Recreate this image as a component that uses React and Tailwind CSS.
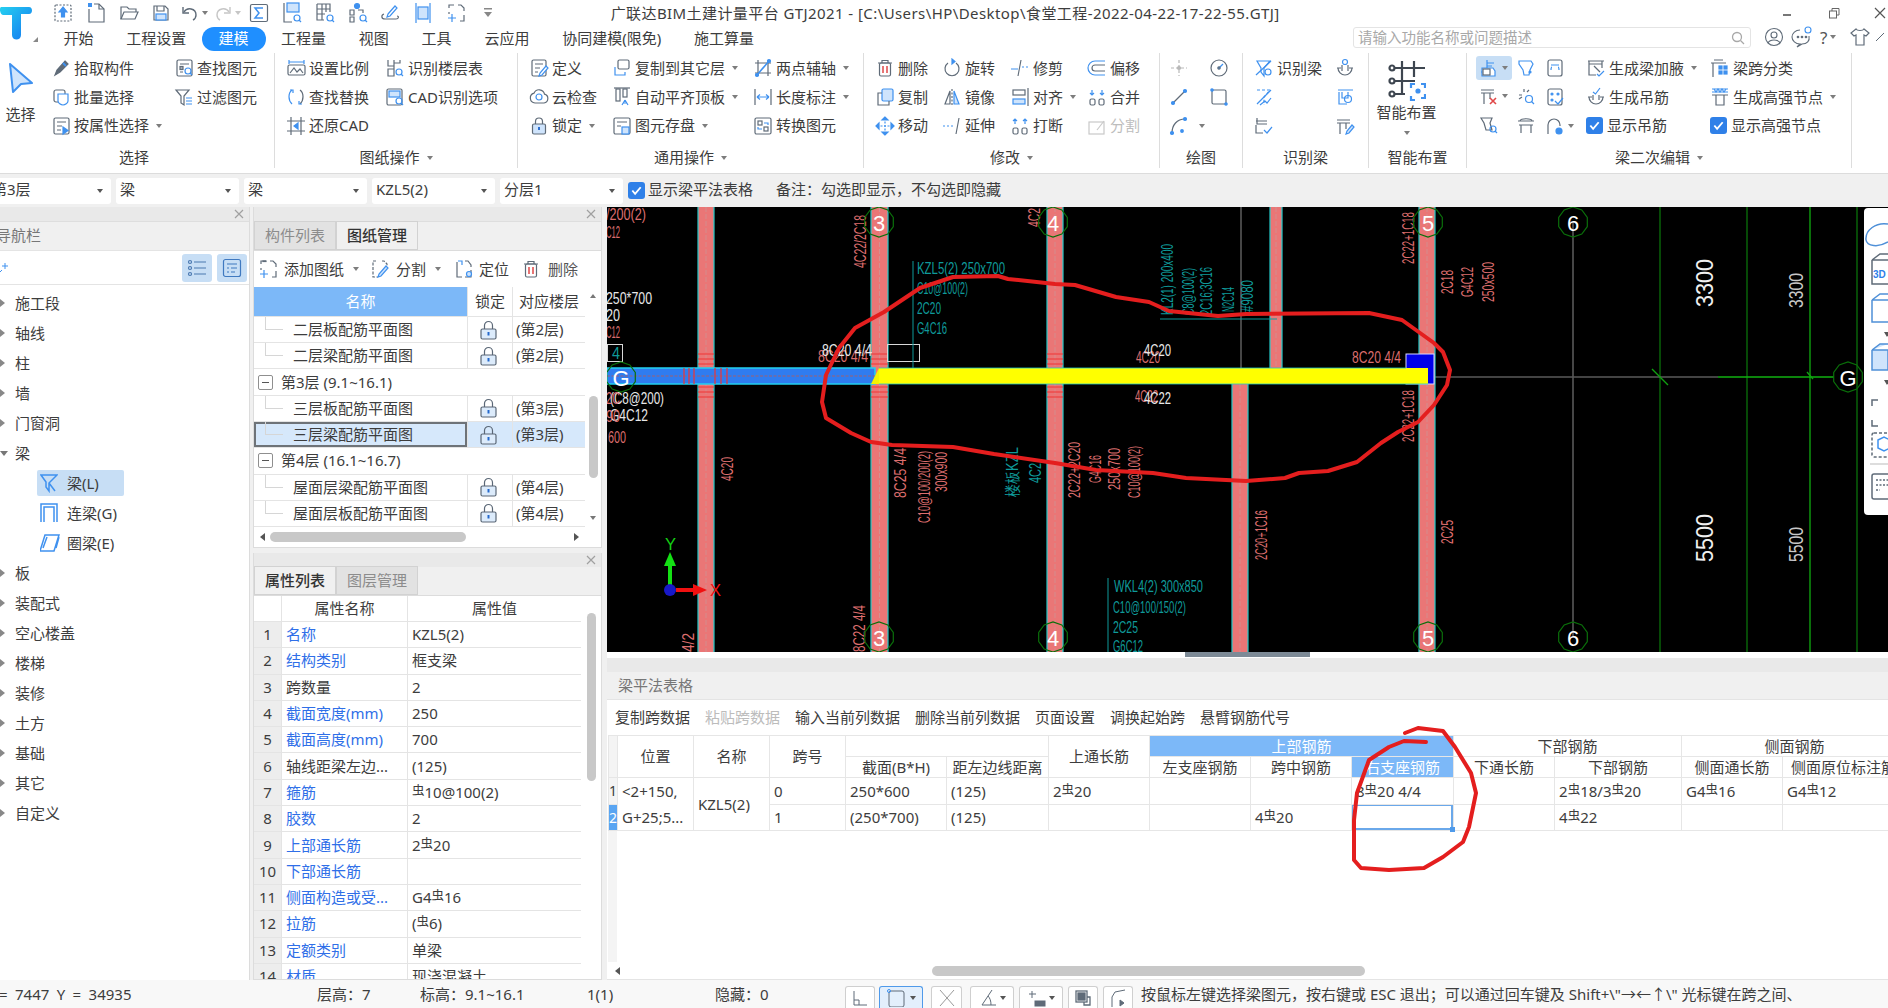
const G = "#5f6b78";
const B = "#3f91ef";
const L = "#cfe4fc";

// ribbon and toolbar glyphs, all on a 20x20 box
const icons = {
  pick: <><path d="M14 3l3 3-8 8-5 3 2-5z" fill={G} stroke={G} /><path d="M12 5l3 3" stroke={B} strokeWidth="2" /></>,
  batch: <><rect x="3" y="3" width="11" height="12" rx="2" /><path d="M7 7h10v7c0 2-3 4-5 4s-5-2-5-4z" fill="#fff" stroke={B} /></>,
  attr: <><rect x="3" y="2" width="15" height="16" rx="1.5" /><path d="M6 6h9M6 10h5M6 14h4" /><path d="M12 11l5 3.5-5 3.5z" fill={B} stroke={B} /></>,
  find: <><rect x="3" y="2" width="15" height="16" rx="1.5" /><path d="M6 6h9M6 10h3M6 14h3" /><rect x="6" y="8.5" width="3" height="3" /><circle cx="14" cy="13" r="3" stroke={B} /><path d="M16 15l2 2" stroke={B} /></>,
  filter: <><path d="M2 3h13l-5 6v9l-3-2V9z" /><path d="M12 11h6M12 14h6M12 17h6" stroke={B} /></>,
  scale: <><path d="M3 2v4M18 2v4M3 4h15" stroke={B} /><rect x="2" y="7" width="17" height="10" rx="1.5" /><path d="M4 15l4-5 3 4 3-3 3 4" /></>,
  floorTable: <><path d="M3 2v6h6V2M9 5h6V2M3 11h6v7H3zM9 8v3" /><circle cx="14" cy="14" r="3" stroke={B} /><path d="M16 16l2 2" stroke={B} /></>,
  swap: <><path d="M6 3C2 6 2 13 6 17" stroke={B} /><path d="M14 3c4 3 4 10 0 14" /><path d="M4 3h3v3M16 17h-3v-3" stroke={B} /></>,
  cad: <><rect x="2" y="2" width="15" height="16" rx="1.5" /><rect x="4" y="4" width="11" height="6" fill={L} stroke={B} /><circle cx="14" cy="14" r="3" stroke={B} /><path d="M16 16l2 2" stroke={B} /></>,
  restore: <><path d="M5 1v18M15 1v18M1 5h18M1 15h18" /><path d="M12 7l-4 3 4 3z" fill={B} stroke={B} /></>,
  define: <><rect x="3" y="2" width="14" height="16" rx="1.5" /><path d="M6 6h8M6 10h5M6 14h3" /><path d="M17 8l-6 7-1 3 3-1 6-7z" fill="#fff" stroke={B} /></>,
  cloud: <><path d="M6 16a5 5 0 0 1-1-9.800a5.500 5.500 0 0 1 10.500 1A4.500 4.500 0 0 1 15 16z" /><circle cx="10" cy="10" r="3" stroke={B} /></>,
  lock: <><path d="M6.500 8V5.500a3.500 3.500 0 0 1 7 0V8" /><rect x="3.500" y="8" width="13" height="10" rx="1.500" fill={L} /><path d="M10 11v3" stroke="#2d6fd0" strokeWidth="2" /></>,
  copyFloor: <><rect x="6" y="2" width="11" height="9" rx="1.500" /><path d="M3 9v8h10v-3" stroke={B} /></>,
  autoAlign: <><rect x="4" y="2" width="4" height="12" /><rect x="11" y="2" width="4" height="8" /><path d="M2 1h16" /><path d="M13 13l-3 5M13 13l3 5M11 16h4" stroke={B} /></>,
  saveEl: <><rect x="2" y="2" width="16" height="16" rx="1.500" /><path d="M5 6h10M5 10h4" /><rect x="10" y="11" width="7" height="7" fill={L} stroke={B} /></>,
  twoPoint: <><path d="M5 2v16M15 2v16M2 5h16M2 15h16" /><path d="M4 17L16 3" stroke={B} strokeWidth="1.600" /><circle cx="4" cy="17" r="1.500" fill={B} stroke={B} /><circle cx="16" cy="3" r="1.500" fill={B} stroke={B} /></>,
  length: <><path d="M2 2v16M18 2v16" /><path d="M4 10h12M4 10l3-2.500M4 10l3 2.500M16 10l-3-2.500M16 10l-3 2.500" stroke={B} /></>,
  convert: <><rect x="2" y="2" width="16" height="16" rx="1.500" /><rect x="5" y="5" width="4" height="4" /><rect x="11" y="11" width="4" height="4" /><path d="M11 7h4v2M9 13H5v-2" stroke={B} /></>,
  trash: <><path d="M3 5h14M7 5V2.500h6V5" /><rect x="4.500" y="5" width="11" height="13" rx="1.500" /><path d="M8 8v7M12 8v7" stroke="#e04848" strokeWidth="1.500" /></>,
  rotate: <><path d="M14 5a7 7 0 1 1-8 0" /><path d="M10 1v5l3-2.500z" fill={B} stroke={B} /></>,
  trim: <><path d="M1 11h7M12 9h2M16 9h2" stroke={B} /><path d="M11 2L8 18" /></>,
  offset: <><path d="M18 3H8a7 7 0 0 0 0 14h10" stroke={B} /><path d="M18 7H8a3 3 0 0 0 0 6h10" /></>,
  copy: <><rect x="7" y="2" width="11" height="12" rx="1.500" fill={L} stroke={B} /><path d="M7 6H3v12h11v-4" /></>,
  mirror: <><path d="M8 4L3 17h5z" /><path d="M12 4l5 13h-5z" fill={L} stroke={B} /><path d="M10 2v16" strokeDasharray="2 1.500" /></>,
  align: <><rect x="3" y="3" width="12" height="5" /><rect x="3" y="12" width="12" height="5" fill={L} stroke={B} /><path d="M18 1v18" /></>,
  merge: <><rect x="3" y="12" width="5" height="6" rx="1.500" /><rect x="12" y="12" width="5" height="6" rx="1.500" /><path d="M5 3v5M15 3v5M3 6l2 2 2-2M13 6l2 2 2-2" stroke={B} /></>,
  move: <><path d="M10 2v16M2 10h16" stroke={B} strokeDasharray="2 1.500" /><path d="M10 1l-3 3h6zM10 19l-3-3h6zM1 10l3-3v6zM19 10l-3-3v6z" fill={B} stroke={B} /></>,
  extend: <><path d="M1 10h2M5 10h2M9 10h2" stroke={B} /><path d="M17 2l-3 16" /></>,
  split: <><rect x="3" y="12" width="5" height="6" rx="1.500" /><rect x="12" y="12" width="5" height="6" rx="1.500" /><path d="M5 3v5M15 3v5M3 5l2-2 2 2M13 5l2-2 2 2" stroke={B} /></>,
  splitOff: <g stroke="#c9c9c9"><rect x="2" y="6" width="15" height="12" /><path d="M10 14l7-9" /></g>,
  cross: <g stroke="#b8b8b8"><path d="M10 2v16M2 10h16" strokeDasharray="3 2" /><circle cx="10" cy="10" r="1.500" fill="#b8b8b8" /></g>,
  clock: <><circle cx="10" cy="10" r="8" /><path d="M10 10l4-4" stroke={B} /><circle cx="10" cy="10" r="1.200" fill={B} /></>,
  line: <><path d="M4 16L16 4" /><circle cx="4" cy="16" r="1.500" fill={B} stroke={B} /><circle cx="16" cy="4" r="1.500" fill={B} stroke={B} /></>,
  rect: <><rect x="3" y="3" width="14" height="14" rx="1.500" /><circle cx="3" cy="3" r="1.200" fill={B} stroke={B} /><circle cx="17" cy="17" r="1.200" fill={B} stroke={B} /></>,
  arc: <><path d="M3 17C3 9 8 3 16 3" /><circle cx="3" cy="17" r="1.500" fill={B} stroke={B} /><circle cx="16" cy="3" r="1.500" fill={B} stroke={B} /><circle cx="13" cy="15" r="1.300" fill={B} stroke={B} /></>,
  beamId: <><path d="M3 3h13L10 10v8l-3-4V10z" stroke={B} /><circle cx="14" cy="14" r="3" stroke={B} /><path d="M2 17L17 3" stroke={B} /></>,
  beamId2: <><path d="M3 3h13L10 10v8" stroke={B} strokeDasharray="3 2" /><path d="M3 17L17 3M6 18l5-4 2 2 4-5" stroke={B} /></>,
  beamId3: <><path d="M3 2v6h10M2 5h11M2 9v8h7" /><path d="M10 14l3 3 5-6" stroke={B} /></>,
  hook: <><circle cx="10" cy="4" r="2.500" stroke={B} /><path d="M3 10a7 7 0 0 0 14 0M7 7v6M13 7v6M2 10h4M14 10h4" /></>,
  beamTb: <><path d="M3 3h15M4 5v12h8" stroke={B} /><path d="M7 5v6h6V5" stroke={B} /><circle cx="13" cy="12" r="3.500" stroke={B} /></>,
  beamPen: <><path d="M2 4h13M2 7h13M5 7v11M11 7v6" /><path d="M17 9l-5 6-1 3 3-1 5-6z" fill={L} stroke={B} /></>,
  beamBtn: <><path d="M8 2v11M2 14h12M8 5h7M8 8h5" stroke={B} /><path d="M3 10h11l2 3v5H3z" fill="#fff" stroke={B} /><rect x="4" y="11" width="7" height="6" stroke={G} /></>,
  shield: <><path d="M3 3h12l2 3-3 6-1 5H8l-1-5-4-6z" stroke={B} /><circle cx="14" cy="14" r="1" stroke={B} fill={B} /></>,
  slot: <><rect x="3" y="2" width="14" height="16" rx="2" /><path d="M6 7h8M6 12c0-3 1-3 1-3M14 12c0-3-1-3-1-3" stroke={B} /></>,
  genHaunch: <><path d="M2 3h16M3 3v14h7M16 3v7M3 6h13" /><path d="M8 8l6 6" /><path d="M11 16l2 2 5-5" stroke={B} /></>,
  span: <><path d="M4 2h9M1 5h15M3 5v14" /><rect x="9" y="8" width="3" height="3" fill={B} stroke={B} /><rect x="14" y="8" width="3" height="3" fill={B} stroke={B} /><rect x="9" y="13" width="3" height="3" fill={B} stroke={B} /><rect x="14" y="13" width="3" height="3" fill={B} stroke={B} /></>,
  delBar: <><path d="M2 4h13M2 7h13M5 7v11M11 7v6" /><path d="M11 12l6 6M17 12l-6 6" stroke="#e04848" strokeWidth="1.600" /></>,
  burst: <><path d="M3 8h3M8 2v3M13 3l-2 2M3 12l3-2" /><circle cx="13" cy="12" r="3.500" stroke={B} /><path d="M15.500 14.500l2.500 2.500" stroke={B} /></>,
  dotsChk: <><rect x="3" y="2" width="14" height="16" rx="2" /><circle cx="7" cy="7" r="1" fill={B} stroke={B} /><circle cx="13" cy="7" r="1" fill={B} stroke={B} /><circle cx="7" cy="13" r="1" fill={B} stroke={B} /><path d="M10 14l3 3 5-6" stroke={B} /></>,
  genHang: <><path d="M3 10a7 7 0 0 0 14 0M7 8v5M13 8v5M2 10h4M14 10h4" /><path d="M7 5l2.500 2L14 1" stroke={B} /></>,
  highNode: <><path d="M2 2h16M2 5h16" stroke={B} /><path d="M4 2l2 3 2-3 2 3 2-3 2 3 2-3" stroke={B} /><path d="M2 8h16M6 8v10h8V8" /></>,
  capSearch: <><path d="M2 3h11l-2 5 2 7H7L5 8z" /><circle cx="14" cy="14" r="3" stroke={B} /><path d="M16 16l2 2" stroke={B} /></>,
  arch: <><path d="M2 5h16M4 5c0-3 12-3 12 0M3 9h14M5 9v8M15 9v8" /></>,
  headset: <><path d="M3 18V9a6 6 0 0 1 12 0v1M3 12v4" /><circle cx="14" cy="15" r="3" fill={B} stroke={B} /></>,
  addPage: <><path d="M8 2H3v3M12 2h3l3 3v3M18 12v6h-4M3 9v2" /><path d="M2 15h8M6 11v8" stroke={B} /><rect x="5" y="2" width="3" height="0.500" /></>,
  penPage: <><path d="M6 2H3v16h5M12 2h2l3 3v2" strokeDasharray="3 1.500" /><path d="M16 7l-7 8-1 3 3-1 7-8z" fill={L} stroke={B} /></>,
  locate: <><path d="M2 3v15h5M10 18h6v-7M10 2h3l3 4v2" /><path d="M3 2h4v4" stroke={B} /><circle cx="14" cy="15" r="2.500" fill={L} stroke={B} /></>,
};

function Ic({ n, s = 20 }) {
  return (
    <svg width={s} height={s} viewBox="0 0 20 20" fill="none" stroke={G} strokeWidth="1.200" className="shrink-0">
      {icons[n]}
    </svg>
  );
}

const Caret = ({ c = "#7d7d7d", w = "ml-[7px]" }) => (
  <span className={`${w} inline-block h-0 w-0 shrink-0 border-x-[3.5px] border-t-[4px] border-x-transparent`} style={{ borderTopColor: c }} />
);

const Check = ({ m = "" }) => (
  <span className={`${m} flex h-[17px] w-[17px] shrink-0 items-center justify-center rounded-[3px] bg-[#2f80e8]`}>
    <svg width="13" height="13" viewBox="0 0 14 14" fill="none" stroke="#fff" strokeWidth="2"><path d="M2.500 7l3 3.500 6-7" /></svg>
  </span>
);

function Tool({ n, t, caret, off, w }) {
  return (
    <div className={`flex h-[28.8px] items-center whitespace-nowrap ${w || ""} ${off ? "text-[#bdbdbd]" : ""}`}>
      <Ic n={n} />
      <span className="ml-[3px]">{t}</span>
      {caret && <Caret />}
    </div>
  );
}

const Col = ({ w, children }) => <div className={`flex shrink-0 flex-col ${w}`}>{children}</div>;

function Group({ w, label, caret, pl, lbl = "", children }) {
  return (
    <div className={`flex h-[115px] shrink-0 flex-col border-r border-[#dddddd] ${w}`}>
      <div className={`flex pt-[1px] ${pl}`}>{children}</div>
      <div className={`mt-auto flex h-[18px] items-start justify-center leading-none ${lbl}`}>
        {label}
        {caret && <Caret w="ml-[7px] mt-[6px]" />}
      </div>
    </div>
  );
}

function Qat({ children }) {
  return <div className="flex h-[26px] w-[32.7px] shrink-0 items-center justify-center">{children}</div>;
}

function TitleBar() {
  return (
    <div className="relative flex h-[26px] items-center pl-[47px] text-[15px]">
      <Qat><svg width="20" height="20" viewBox="0 0 20 20" fill="none" stroke={G} strokeWidth="1.200"><rect x="2" y="2" width="16" height="16" rx="1" strokeDasharray="2 1.500" /><path d="M10 4l-4 5h2.500v5h3V9H14z" fill={B} stroke={B} /></svg></Qat>
      <Qat><svg width="20" height="22" viewBox="0 0 20 22" fill="none" stroke={G} strokeWidth="1.200"><path d="M8 2h5l5 5v13H3V7" /><path d="M13 2v5h5" /><rect x="2" y="1" width="4" height="4" fill={B} stroke="none" /></svg></Qat>
      <Qat><svg width="20" height="18" viewBox="0 0 20 18" fill="none" stroke={G} strokeWidth="1.200"><path d="M2 15V3h6l2 2h7v3" /><path d="M2 15l3-7h14l-3 7z" /></svg></Qat>
      <Qat><svg width="18" height="18" viewBox="0 0 18 18" fill="none" stroke={G} strokeWidth="1.200"><path d="M2 2h11l3 3v11H2z" /><path d="M5 2v5h7V2" /><rect x="4" y="10" width="10" height="6" fill={L} stroke={B} /></svg></Qat>
      <Qat><svg width="20" height="18" viewBox="0 0 20 18" fill="none" stroke={G} strokeWidth="1.400"><path d="M4 8c3-5 12-4 12 3 0 2-1 4-3 5" /><path d="M3 3v6h6" /></svg><Caret w="ml-[2px]" /></Qat>
      <Qat><svg width="20" height="18" viewBox="0 0 20 18" fill="none" stroke="#c6c6c6" strokeWidth="1.400"><path d="M16 8C13 3 4 4 4 11c0 2 1 4 3 5" /><path d="M17 3v6h-6" /></svg><Caret c="#c6c6c6" w="ml-[2px]" /></Qat>
      <Qat><svg width="20" height="20" viewBox="0 0 20 20" fill="none" stroke={G} strokeWidth="1.200"><rect x="1.500" y="1.500" width="17" height="17" rx="1.500" /><path d="M14 5H6l4 5-4 5h8" stroke={B} strokeWidth="1.500" /></svg></Qat>
      <Qat><svg width="20" height="22" viewBox="0 0 20 22" fill="none" stroke={G} strokeWidth="1.200"><path d="M2 1v19h8" /><rect x="5" y="1" width="12" height="9" fill={L} stroke={B} /><circle cx="15" cy="16" r="3" stroke={B} /><path d="M17 18l2 2" stroke={B} /></svg></Qat>
      <Qat><svg width="20" height="22" viewBox="0 0 20 22" fill="none" stroke={G} strokeWidth="1.200"><path d="M2 2h13v8M2 2v16h7M2 7h13M2 12h8M7 2v16M11 2v8" /><circle cx="15" cy="16" r="3" stroke={B} /><path d="M17 18l2 2" stroke={B} /></svg></Qat>
      <Qat><svg width="20" height="22" viewBox="0 0 20 22" fill="none" stroke={G} strokeWidth="1.200"><circle cx="9" cy="4" r="2.500" fill={B} stroke={B} /><path d="M2 8h4v5H2zM2 15h4v5H2zM10 8h5v3" /><circle cx="15" cy="16" r="3" stroke={B} /><path d="M17 18l2 2" stroke={B} /></svg></Qat>
      <Qat><svg width="20" height="20" viewBox="0 0 20 20" fill="none" stroke={G} strokeWidth="1.200"><path d="M4 11c-3 1-3 5 1 5h11c3 0 3-3 1-3" /><path d="M8 11l7-8 2 2-7 8-3 1z" stroke={B} /></svg></Qat>
      <Qat><svg width="20" height="22" viewBox="0 0 20 22" fill="none" stroke={B} strokeWidth="1.200"><path d="M3 1v20M17 1v20M5 11h10" /><rect x="5" y="5" width="10" height="12" fill={L} /></svg></Qat>
      <Qat><svg width="20" height="20" viewBox="0 0 20 20" fill="none" stroke={G} strokeWidth="1.200"><path d="M8 2H3v3M12 2h3l3 3v3M18 12v6h-4M3 9v2" /><path d="M2 15h8M6 11v8" stroke={B} /></svg></Qat>
      <Qat><svg width="8" height="10" viewBox="0 0 8 10" fill="#888"><rect x="0" y="0" width="8" height="1.500" /><path d="M0 4h8L4 9z" /></svg></Qat>
      <div className="ml-[106px] whitespace-nowrap text-[15px] tracking-[0.42px]">广联达BIM土建计量平台 GTJ2021 - [C:\Users\HP\Desktop\食堂工程-2022-04-22-17-22-55.GTJ]</div>
      <div className="ml-auto flex items-center pr-[2px]">
        <span className="mr-[38px] mt-[3px] h-[2px] w-[8px] bg-[#777]" />
        <svg width="11" height="11" viewBox="0 0 11 11" fill="none" stroke="#666" className="mr-[34px]"><rect x="0.500" y="3" width="7" height="7" /><path d="M3 3V0.500h7V7H8" /></svg>
        <svg width="12" height="12" viewBox="0 0 12 12" stroke="#555" strokeWidth="1.200"><path d="M1 1l10 10M11 1L1 11" /></svg>
      </div>
    </div>
  );
}

function TabBar() {
  const tabs = ["开始", "工程设置", "建模", "工程量", "视图", "工具", "云应用", "协同建模(限免)", "施工算量"];
  return (
    <div className="relative flex h-[25px] items-center pl-[47px] text-[15px]">
      {tabs.map((t) =>
        t === "建模" ? (
          <div key={t} className="-mx-[1px] flex h-[24px] w-[64px] items-center justify-center rounded-full bg-[#1f8fff] text-white">{t}</div>
        ) : (
          <div key={t} className="px-[16.4px] whitespace-nowrap">{t}</div>
        ),
      )}
      <div className="absolute left-[1353px] top-[1px] flex h-[21px] w-[398px] items-center justify-between rounded-[3px] border border-[#e4e4e4] pl-[4px] pr-[5px] text-[14.5px] text-[#a8a8a8]">
        请输入功能名称或问题描述
        <svg width="14" height="14" viewBox="0 0 14 14" fill="none" stroke="#a8a8a8" strokeWidth="1.300"><circle cx="6" cy="6" r="4.500" /><path d="M9.500 9.500L13 13" /></svg>
      </div>
      <div className="absolute left-[1764px] top-0 flex h-[22px] items-center">
        <svg width="20" height="20" viewBox="0 0 20 20" fill="none" stroke={G} strokeWidth="1.100"><circle cx="10" cy="10" r="8.500" /><circle cx="10" cy="8" r="3" /><path d="M4 16c2-4 10-4 12 0" /></svg>
        <svg width="22" height="22" viewBox="0 0 22 22" fill="none" stroke={G} strokeWidth="1.100" className="ml-[7px]"><path d="M9 4a8 7 0 1 0 0 14l-3 3 5-3c5 0 8-3 7-8" /><circle cx="7" cy="11" r="0.800" fill={G} /><circle cx="11" cy="11" r="0.800" fill={G} /><circle cx="15" cy="11" r="0.800" fill={G} /><circle cx="17" cy="4" r="3" stroke={B} /></svg>
        <span className="ml-[7px] text-[17px] leading-none text-[#555]">?</span>
        <Caret w="ml-[3px]" />
        <svg width="20" height="20" viewBox="0 0 20 20" fill="none" stroke={G} strokeWidth="1.200" className="ml-[14px]"><path d="M6 2L1 6l3 3 2-1v10h8V8l2 1 3-3-5-4c-1 2-7 2-8 0z" /></svg>
        <svg width="10" height="10" viewBox="0 0 10 10" fill="none" stroke={G} className="ml-[6px]"><path d="M0 9l8-8" /></svg>
      </div>
    </div>
  );
}

function Ribbon() {
  return (
    <div className="flex h-[122px] pt-[2px] text-[15px]">
      <Group w="w-[275px]" label="选择" lbl="pr-[6px]">
        <div className="flex w-[51px] shrink-0 flex-col items-center pr-[10px]">
          <svg width="26" height="32" viewBox="0 0 26 32" className="mt-[8px]"><path d="M2 2l22 19-11 1-8 8z" fill={L} stroke={B} strokeWidth="2" strokeLinejoin="round" /></svg>
          <span className="mt-[13px] leading-none">选择</span>
        </div>
        <Col w="w-[123px]">
          <Tool n="pick" t="拾取构件" />
          <Tool n="batch" t="批量选择" />
          <Tool n="attr" t="按属性选择" caret />
        </Col>
        <Col w="w-[90px]">
          <Tool n="find" t="查找图元" />
          <Tool n="filter" t="过滤图元" />
        </Col>
      </Group>
      <Group w="w-[243px]" label="图纸操作" caret pl="pl-[11px]">
        <Col w="w-[99px]">
          <Tool n="scale" t="设置比例" />
          <Tool n="swap" t="查找替换" />
          <Tool n="restore" t="还原CAD" />
        </Col>
        <Col w="w-[120px]">
          <Tool n="floorTable" t="识别楼层表" />
          <Tool n="cad" t="CAD识别选项" />
        </Col>
      </Group>
      <Group w="w-[346px]" label="通用操作" caret pl="pl-[11px]">
        <Col w="w-[83px]">
          <Tool n="define" t="定义" />
          <Tool n="cloud" t="云检查" />
          <Tool n="lock" t="锁定" caret />
        </Col>
        <Col w="w-[141px]">
          <Tool n="copyFloor" t="复制到其它层" caret />
          <Tool n="autoAlign" t="自动平齐顶板" caret />
          <Tool n="saveEl" t="图元存盘" caret />
        </Col>
        <Col w="w-[100px]">
          <Tool n="twoPoint" t="两点辅轴" caret />
          <Tool n="length" t="长度标注" caret />
          <Tool n="convert" t="转换图元" />
        </Col>
      </Group>
      <Group w="w-[296px]" label="修改" caret pl="pl-[11px]">
        <Col w="w-[67px]">
          <Tool n="trash" t="删除" />
          <Tool n="copy" t="复制" />
          <Tool n="move" t="移动" />
        </Col>
        <Col w="w-[68px]">
          <Tool n="rotate" t="旋转" />
          <Tool n="mirror" t="镜像" />
          <Tool n="extend" t="延伸" />
        </Col>
        <Col w="w-[77px]">
          <Tool n="trim" t="修剪" />
          <Tool n="align" t="对齐" caret />
          <Tool n="split" t="打断" />
        </Col>
        <Col w="w-[65px]">
          <Tool n="offset" t="偏移" />
          <Tool n="merge" t="合并" />
          <Tool n="splitOff" t="分割" off />
        </Col>
      </Group>
      <Group w="w-[83px]" label="绘图" pl="pl-[9px]">
        <Col w="w-[40px]">
          <Tool n="cross" />
          <Tool n="line" />
          <Tool n="arc" caret />
        </Col>
        <Col w="w-[24px]">
          <Tool n="clock" />
          <Tool n="rect" />
        </Col>
      </Group>
      <Group w="w-[126px]" label="识别梁" pl="pl-[11px]">
        <Col w="w-[81px]">
          <Tool n="beamId" t="识别梁" />
          <Tool n="beamId2" />
          <Tool n="beamId3" />
        </Col>
        <Col w="w-[24px]">
          <Tool n="hook" />
          <Tool n="beamTb" />
          <Tool n="beamPen" />
        </Col>
      </Group>
      <Group w="w-[98px]" label="智能布置">
        <div className="flex w-full flex-col items-center pr-[22px]">
          <svg width="38" height="40" viewBox="0 0 38 40" fill="none" stroke="#3e4650" strokeWidth="2.200" className="mt-[7px]">
            <path d="M5 7h32M5 20h22M5 33h12M14 0v33M26 0v16" />
            <circle cx="4" cy="7" r="2.500" fill="#fff" />
            <circle cx="4" cy="20" r="2.500" fill="#fff" />
            <circle cx="4" cy="33" r="2.500" fill="#fff" />
            <path d="M23 27v-4h4M33 23h4v4M37 33v4h-4M27 39h-4v-4" stroke={B} />
            <circle cx="30" cy="30" r="1.500" fill={B} stroke={B} />
          </svg>
          <span className="mt-[4px] leading-none">智能布置</span>
          <Caret w="mt-[11px]" />
        </div>
      </Group>
      <Group w="w-[385px]" label="梁二次编辑" caret pl="pl-[9px]">
        <Col w="w-[40px]">
          <div className="mt-[2px] flex h-[24px] w-[36px] items-center rounded-[3px] bg-[#c7def5] pl-[3px]"><Ic n="beamBtn" /><Caret w="ml-[3px]" /></div>
          <div className="mt-[2px] flex h-[28.8px] items-center pl-[3px]"><Ic n="delBar" /><Caret w="ml-[3px]" /></div>
          <div className="flex h-[28.8px] items-center pl-[3px]"><Ic n="capSearch" /></div>
        </Col>
        <Col w="w-[29px]">
          <Tool n="shield" />
          <Tool n="burst" />
          <Tool n="arch" />
        </Col>
        <Col w="w-[41px]">
          <Tool n="slot" />
          <Tool n="dotsChk" />
          <div className="flex h-[28.8px] items-center"><Ic n="headset" /><Caret w="ml-[3px]" /></div>
        </Col>
        <Col w="w-[124px]">
          <Tool n="genHaunch" t="生成梁加腋" caret />
          <Tool n="genHang" t="生成吊筋" />
          <div className="flex h-[28.8px] items-center"><Check m="mr-[4px]" />显示吊筋</div>
        </Col>
        <Col w="w-[140px]">
          <Tool n="span" t="梁跨分类" />
          <Tool n="highNode" t="生成高强节点" caret />
          <div className="flex h-[28.8px] items-center"><Check m="mr-[4px]" />显示高强节点</div>
        </Col>
      </Group>
    </div>
  );
}

function Combo({ t, w = "w-[123px]" }) {
  return (
    <div className={`flex h-[26px] shrink-0 items-center justify-between rounded-[3px] bg-white px-[4px] pr-[8px] ${w}`}>
      <span className="-mt-[2px]">{t}</span>
      <Caret c="#555" />
    </div>
  );
}

function FormatBar() {
  return (
    <div className="flex h-[34px] items-center gap-[5px] border-t border-[#dcdcdc] bg-[#f0f0f0] text-[15px]">
      <div className="-ml-[12px] flex">
        <Combo t="第3层" w="w-[123px]" />
      </div>
      <Combo t="梁" />
      <Combo t="梁" />
      <Combo t="KZL5(2)" />
      <Combo t="分层1" />
      <Check />
      <span className="-ml-[2px] -mt-[2px] whitespace-nowrap">显示梁平法表格</span>
      <span className="ml-[18px] -mt-[2px] whitespace-nowrap">备注：勾选即显示，不勾选即隐藏</span>
    </div>
  );
}

const CloseX = () => (
  <svg width="10" height="10" viewBox="0 0 10 10" stroke="#a0a0a0" strokeWidth="1.200"><path d="M1 1l8 8M9 1L1 9" /></svg>
);

const Strip = () => (
  <div className="flex h-[15px] shrink-0 items-center justify-end border-b border-[#dedede] bg-[#e9e9e9] pr-[5px]"><CloseX /></div>
);

function NavPanel() {
  const head = ["施工段", "轴线", "柱", "墙", "门窗洞"];
  const tail = ["板", "装配式", "空心楼盖", "楼梯", "装修", "土方", "基础", "其它", "自定义"];
  const Row = ({ t, open }) => (
    <div className="flex h-[30px] items-center">
      {open ? (
        <span className="ml-[0px] h-0 w-0 border-x-[4px] border-t-[5px] border-x-transparent border-t-[#777]" />
      ) : (
        <span className="h-0 w-0 border-y-[4px] border-l-[5px] border-y-transparent border-l-[#888]" />
      )}
      <span className={open ? "ml-[7px]" : "ml-[10px]"}>{t}</span>
    </div>
  );
  return (
    <div className="flex w-[250px] shrink-0 flex-col overflow-hidden border-r border-[#dcdcdc] bg-white text-[15px]">
      <Strip />
      <div className="flex h-[28px] shrink-0 items-center bg-[#f0f0f0] pl-[0px] text-[#777]"><span className="-ml-[4px] -mt-[2px]">导航栏</span></div>
      <div className="flex h-[35px] shrink-0 items-center justify-between border-y border-[#e4e4e4] pr-[2px]">
        <svg width="9" height="12" viewBox="0 0 9 12" fill="none" stroke={B}><path d="M5 1v6M2 4h6M0 10l2-2" /></svg>
        <div className="flex gap-[5px]">
          <div className="flex h-[28px] w-[30px] items-center justify-center rounded-[3px] bg-[#c7def5]">
            <svg width="20" height="18" viewBox="0 0 20 18" fill="none" stroke="#4a78b0" strokeWidth="1.200"><circle cx="3" cy="3" r="1.500" /><circle cx="3" cy="9" r="1.500" /><circle cx="3" cy="15" r="1.500" /><path d="M7 3h12M7 9h12M7 15h12" /></svg>
          </div>
          <div className="flex h-[28px] w-[30px] items-center justify-center rounded-[3px] bg-[#c7def5]">
            <svg width="20" height="20" viewBox="0 0 20 20" fill="none" stroke="#3f79c0" strokeWidth="1.200"><rect x="1.500" y="1.500" width="17" height="17" rx="2" /><path d="M5 6h10M5 10h2M9 10h6M5 14h2M9 14h4" /></svg>
          </div>
        </div>
      </div>
      <div className="flex flex-col pt-[3px]">
        {head.map((t) => <Row key={t} t={t} />)}
        <Row t="梁" open />
        <div className="flex h-[30px] items-center pl-[37px]">
          <div className="flex h-[26px] w-[87px] items-center rounded-[2px] bg-[#c7def5] pl-[3px]">
            <svg width="18" height="20" viewBox="0 0 18 20" fill="none" stroke={B} strokeWidth="1.500"><path d="M1 2h16L9 10v8L6 14V9zM9 10l6 8" /></svg>
            <span className="ml-[9px]">梁(L)</span>
          </div>
        </div>
        <div className="flex h-[30px] items-center pl-[40px]">
          <svg width="18" height="20" viewBox="0 0 18 20" fill="none" stroke={B} strokeWidth="1.500"><path d="M1 19V1h16v18M4 19V4h10v15" /></svg>
          <span className="ml-[9px]">连梁(G)</span>
        </div>
        <div className="flex h-[30px] items-center pl-[40px]">
          <svg width="20" height="20" viewBox="0 0 20 20" fill="none" stroke={B} strokeWidth="1.500"><path d="M5 2h14l-5 16H0zM3 15L7 4M16 15L19 4" /></svg>
          <span className="ml-[7px]">圈梁(E)</span>
        </div>
        {tail.map((t) => <Row key={t} t={t} />)}
      </div>
    </div>
  );
}

function Lock() {
  return (
    <svg width="17" height="20" viewBox="0 0 17 20" fill="none" stroke="#5a6776" strokeWidth="1.200">
      <path d="M4.500 9V5.500a4 4 0 0 1 8 0V9" />
      <rect x="1" y="9" width="15" height="10" rx="1.500" fill="#dcebfb" />
      <path d="M8.500 12v3.500" stroke="#2468cc" strokeWidth="2" />
    </svg>
  );
}

function DrawingRow({ t, f, sel }) {
  return (
    <div className={`grid h-[26.3px] grid-cols-[213px_45px_73px] border-b border-[#e4e4e4] ${sel ? "bg-[#d6e8fb]" : ""}`}>
      <div className={`flex items-start pl-[11px] ${sel ? "shadow-[inset_0_0_0_2px_#6e7378]" : ""}`}>
        <div className="h-[13px] w-[18px] shrink-0 border-b border-l border-[#d6d6d6]" />
        <span className="ml-[10px] whitespace-nowrap leading-[24px]">{t}</span>
      </div>
      <div className="flex items-center justify-center border-l border-[#e4e4e4] pr-[3px]"><Lock /></div>
      <div className="flex items-center border-l border-[#e4e4e4] pl-[3px]">{f}</div>
    </div>
  );
}

function FloorRow({ t }) {
  return (
    <div className="flex h-[26.3px] items-center border-b border-[#e4e4e4] pl-[4px]">
      <span className="flex h-[15px] w-[15px] items-center justify-center rounded-[2px] border border-[#8f8f8f]"><span className="h-px w-[7px] bg-[#555]" /></span>
      <span className="ml-[8px]">{t}</span>
    </div>
  );
}

function Tabs({ items, active }) {
  return (
    <div className="flex h-[29px] shrink-0 items-end border-b border-[#dcdcdc] bg-[#f0f0f0]">
      {items.map((t) => (
        <div key={t} className={`flex h-[29px] w-[82px] items-center justify-center border border-[#d2d2d2] ${t === active ? "bg-[#f0f0f0] font-medium text-[#333]" : "bg-[#e2e2e2] text-[#8c8c8c]"}`}>{t}</div>
      ))}
    </div>
  );
}

function DrawingPanel() {
  return (
    <div className="flex h-[341px] shrink-0 flex-col border border-t-0 border-[#dcdcdc] bg-white">
      <Strip />
      <Tabs items={["构件列表", "图纸管理"]} active="图纸管理" />
      <div className="flex h-[36px] shrink-0 items-center pl-[4px]">
        <Ic n="addPage" />
        <span className="ml-[6px]">添加图纸</span>
        <Caret w="ml-[9px]" />
        <span className="ml-[11px]"><Ic n="penPage" /></span>
        <span className="ml-[6px]">分割</span>
        <Caret w="ml-[9px]" />
        <span className="ml-[14px]"><Ic n="locate" /></span>
        <span className="ml-[4px]">定位</span>
        <span className="ml-[12px]"><Ic n="trash" /></span>
        <span className="ml-[7px] text-[#555]">删除</span>
      </div>
      <div className="flex min-h-0 flex-1">
        <div className="flex w-[331px] shrink-0 flex-col">
          <div className="grid h-[30px] grid-cols-[213px_45px_73px] border-b border-[#e4e4e4]">
            <div className="flex items-center justify-center bg-[#7cb8f8] text-white">名称</div>
            <div className="flex items-center justify-center border-l border-[#e4e4e4]">锁定</div>
            <div className="flex items-center justify-center border-l border-[#e4e4e4] whitespace-nowrap">对应楼层</div>
          </div>
          <DrawingRow t="二层板配筋平面图" f="(第2层)" />
          <DrawingRow t="二层梁配筋平面图" f="(第2层)" />
          <FloorRow t="第3层 (9.1~16.1)" />
          <DrawingRow t="三层板配筋平面图" f="(第3层)" />
          <DrawingRow t="三层梁配筋平面图" f="(第3层)" sel />
          <FloorRow t="第4层 (16.1~16.7)" />
          <DrawingRow t="屋面层梁配筋平面图" f="(第4层)" />
          <DrawingRow t="屋面层板配筋平面图" f="(第4层)" />
          <div className="flex h-[20px] items-center pl-[6px]">
            <span className="h-0 w-0 border-y-[4px] border-r-[5px] border-y-transparent border-r-[#555]" />
            <div className="ml-[5px] h-[10px] w-[196px] rounded-full bg-[#c8c8c8]" />
            <span className="ml-[108px] h-0 w-0 border-y-[4px] border-l-[5px] border-y-transparent border-l-[#555]" />
          </div>
        </div>
        <div className="flex w-[17px] flex-col items-center pt-[7px]">
          <span className="h-0 w-0 border-x-[3px] border-b-[4px] border-x-transparent border-b-[#777]" />
          <div className="mt-[98px] h-[82px] w-[9px] rounded-full bg-[#c8c8c8]" />
          <span className="mt-[38px] h-0 w-0 border-x-[3px] border-t-[4px] border-x-transparent border-t-[#777]" />
        </div>
      </div>
    </div>
  );
}

const R = () => <span className="text-[12.5px] align-[3px]">虫</span>;

const props = [
  ["名称", <>KZL5(2)</>, 1],
  ["结构类别", <>框支梁</>, 1],
  ["跨数量", <>2</>, 0],
  ["截面宽度(mm)", <>250</>, 1],
  ["截面高度(mm)", <>700</>, 1],
  ["轴线距梁左边...", <>(125)</>, 0],
  ["箍筋", <><R />10@100(2)</>, 1],
  ["胶数", <>2</>, 1],
  ["上部通长筋", <>2<R />20</>, 1],
  ["下部通长筋", null, 1],
  ["侧面构造或受...", <>G4<R />16</>, 1],
  ["拉筋", <>(<R />6)</>, 1],
  ["定额类别", <>单梁</>, 1],
  ["材质", <>现浇混凝土</>, 1],
];

function PropsPanel() {
  return (
    <div className="mt-[5px] flex min-h-0 flex-1 flex-col overflow-hidden border border-t-0 border-[#dcdcdc] bg-white">
      <div className="flex h-[14px] shrink-0 items-center justify-end bg-[#e9e9e9] pr-[5px]"><CloseX /></div>
      <Tabs items={["属性列表", "图层管理"]} active="属性列表" />
      <div className="flex min-h-0 flex-1">
        <div className="w-[327px] shrink-0">
          <div className="grid h-[26px] grid-cols-[27px_126px_174px] border-b border-[#e4e4e4]">
            <div />
            <div className="flex items-center justify-center border-l border-[#e4e4e4]">属性名称</div>
            <div className="flex items-center justify-center border-l border-[#e4e4e4]">属性值</div>
          </div>
          {props.map(([k, v, blue], i) => (
            <div key={k} className="grid h-[26.3px] grid-cols-[27px_126px_174px] border-b border-[#e4e4e4]">
              <div className="flex items-center justify-center bg-[#ededed]">{i + 1}</div>
              <div className={`flex items-center whitespace-nowrap border-l border-[#e4e4e4] pl-[4px] ${blue ? "text-[#2f6fe8]" : ""}`}>{k}</div>
              <div className="flex items-center border-l border-[#e4e4e4] pl-[4px]"><span>{v}</span></div>
            </div>
          ))}
        </div>
        <div className="flex w-[21px] justify-center pt-[17px]">
          <div className="h-[168px] w-[9px] rounded-full bg-[#c8c8c8]" />
        </div>
      </div>
    </div>
  );
}

// CAD label; r = reads upward
function CT({ x, y, len, c = "#dd6e6e", s = 16, r, children }) {
  const t = r ? `translate(${x} ${y}) rotate(-90)` : `translate(${x} ${y})`;
  return (
    <text transform={t} fontFamily="'Liberation Sans', sans-serif" fontSize={s} fill={c} textLength={len} lengthAdjust="spacingAndGlyphs" dominantBaseline="central">
      {children}
    </text>
  );
}

function Pillar({ x, w = 16, y1 = 207, y2 = 652 }) {
  return (
    <g>
      <rect x={x} y={y1} width={w} height={y2 - y1} fill="#ea7676" />
      <path d={`M${x} ${y1}V${y2}M${x + w} ${y1}V${y2}`} stroke="#22c8c8" strokeWidth="1.200" />
      <path d={`M${x + w / 2} ${y1}V${y2}`} stroke="#c8a0a0" strokeWidth="0.600" strokeDasharray="5 2" />
    </g>
  );
}

function Ticks({ x, w = 16 }) {
  return (
    <path d={`M${x} 354H${x + w}M${x} 359H${x + w}M${x} 364H${x + w}M${x} 387H${x + w}M${x} 392H${x + w}M${x} 397H${x + w}`} stroke="#f03434" strokeWidth="1.200" />
  );
}

function Axis({ x, y, t, c = "#ffffff" }) {
  const pts = [];
  for (let i = 0; i < 10; i++) {
    const a = (Math.PI * 2 * i) / 10 + Math.PI / 10;
    pts.push(`${(x + 15 * Math.cos(a)).toFixed(1)},${(y + 15 * Math.sin(a)).toFixed(1)}`);
  }
  return (
    <g>
      <polygon points={pts.join(" ")} fill="none" stroke="#0a6f0a" strokeWidth="1.200" />
      <text x={x} y={y + 1} textAnchor="middle" dominantBaseline="central" fontFamily="'Liberation Sans', sans-serif" fontSize="22" fill={c}>{t}</text>
    </g>
  );
}

const TEAL = "#0f9a9a";

function CadView() {
  return (
    <div className="relative h-[445px] shrink-0 overflow-hidden bg-black">
      <svg className="block h-full w-full" viewBox="607 207 1281 445">
        {/* grid lines */}
        <path d="M1573 222V637M1241 207V368" stroke="#8c8c8c" />
        <path d="M1660 207V652M1747 207V652M1857 207V652" stroke="#0a7a0a" strokeWidth="1.200" />
        <path d="M1810 207V652" stroke="#0fa00f" strokeWidth="1.400" />
        <path d="M1435 377H1718" stroke="#5a5a5a" strokeWidth="1.400" />
        <path d="M1718 377H1834" stroke="#10b010" strokeWidth="1.600" />
        <path d="M1652 369l16 16M1807 372l6 7" stroke="#10a010" strokeWidth="1.400" />

        <Pillar x={698} />
        <Pillar x={871} w={17} />
        <Pillar x={1047} />
        <Pillar x={1270} w={12} y2={368} />
        <Pillar x={1232} w={16} y1={384} />
        <Pillar x={1419} />
        <Ticks x={698} />
        <Ticks x={871} w={17} />
        <Ticks x={1047} />

        {/* beam */}
        <rect x="607" y="368" width="268" height="16" fill="#2f7cf0" stroke="#22d0f0" strokeWidth="1.500" />
        <path d="M607 376H875" stroke="#a06070" strokeDasharray="3 1.500" />
        <path d="M684 368v16M689 368v16M694 368v16M715 368v16M721 368v16M727 368v16" stroke="#f03434" strokeWidth="1.200" />
        <path d="M871 384l8-16v16z" fill="#f4f400" />
        <rect x="1406" y="354" width="28" height="30" fill="#0000e8" stroke="#d8d8ff" />
        <rect x="879" y="368" width="549" height="16" fill="#ffff00" />
        <path d="M879 368H1406M879 384H1428" stroke="#22c8c8" strokeWidth="0.800" />

        <rect x="607.500" y="344.500" width="15" height="17" fill="none" stroke="#d8d8d8" />
        <rect x="887.500" y="344.500" width="32" height="17" fill="none" stroke="#d8d8d8" />
        <path d="M913 261V368M1108 578V652M1160 319H1277" stroke={TEAL} strokeWidth="1" />

        {/* left edge labels */}
        <CT x={606} y={214} len={40}>/200(2)</CT>
        <CT x={606} y={232} len={14}>C12</CT>
        <CT x={606} y={298} len={46} c="#e8e8e8">250*700</CT>
        <CT x={606} y={315} len={14} c="#e8e8e8">20</CT>
        <CT x={606} y={332} len={14}>C12</CT>
        <CT x={612} y={353} len={8} c={TEAL}>4</CT>
        <CT x={610} y={398} len={54} c="#e8e8e8">(C8@200)</CT>
        <CT x={606} y={398} len={14}>2C</CT>
        <CT x={610} y={415} len={38} c="#e8e8e8">G4C12</CT>
        <CT x={606} y={416} len={14}>90</CT>
        <CT x={608} y={437} len={18}>600</CT>

        <CT x={818} y={356} len={50}>8C20 4/4</CT>
        <CT x={822} y={350} len={50} c="#e8e8e8">8C20 4/4</CT>
        <CT x={1136} y={357} len={24}>4C20</CT>
        <CT x={1144} y={350} len={27} c="#e8e8e8">4C20</CT>
        <CT x={1135} y={396} len={23}>4C22</CT>
        <CT x={1144} y={398} len={27} c="#e8e8e8">4C22</CT>
        <CT x={1352} y={357} len={49}>8C20 4/4</CT>

        {/* upward labels */}
        <CT x={860} y={268} len={53} r>4C22/2C18</CT>
        <CT x={1034} y={227} len={19} r>4C2</CT>
        <CT x={727} y={481} len={24} r>4C20</CT>
        <CT x={900} y={498} len={50} r>8C25 4/4</CT>
        <CT x={924} y={523} len={72} r>C10@100/200(2)</CT>
        <CT x={941} y={492} len={40} r>300x900</CT>
        <CT x={1012} y={497} len={50} c={TEAL} r>楼板KZL</CT>
        <CT x={1035} y={483} len={20} c={TEAL} r>4C2</CT>
        <CT x={1074} y={498} len={56} r>2C22+2C20</CT>
        <CT x={1095} y={483} len={28} r>G4C16</CT>
        <CT x={1114} y={490} len={42} r>250x700</CT>
        <CT x={1134} y={498} len={52} r>C10@100(2)</CT>
        <CT x={688} y={652} len={19} r>4/2</CT>
        <CT x={859} y={652} len={47} r>8C22 4/4</CT>
        <CT x={1408} y={264} len={52} r>2C22+1C18</CT>
        <CT x={1447} y={294} len={24} r>2C18</CT>
        <CT x={1467} y={297} len={30} r>G4C12</CT>
        <CT x={1488} y={302} len={40} r>250x500</CT>
        <CT x={1408} y={442} len={52} r>2C22+1C18</CT>
        <CT x={1261} y={560} len={50} r>2C20+1C16</CT>
        <CT x={1447} y={544} len={24} r>2C25</CT>

        {/* beam specs in teal */}
        <CT x={917} y={268} len={88} c={TEAL}>KZL5(2) 250x700</CT>
        <CT x={917} y={288} len={51} c={TEAL}>C10@100(2)</CT>
        <CT x={917} y={308} len={24} c={TEAL}>2C20</CT>
        <CT x={917} y={328} len={30} c={TEAL}>G4C16</CT>
        <CT x={1114} y={586} len={89} c={TEAL}>WKL4(2) 300x850</CT>
        <CT x={1113} y={607} len={73} c={TEAL}>C10@100/150(2)</CT>
        <CT x={1113} y={627} len={25} c={TEAL}>2C25</CT>
        <CT x={1113} y={646} len={30} c={TEAL}>G6C12</CT>
        <CT x={1167} y={315} len={71} c={TEAL} r>KL2(1) 200x400</CT>
        <CT x={1188} y={315} len={47} c={TEAL} r>C8@100(2)</CT>
        <CT x={1206} y={315} len={48} c={TEAL} r>2C16;3C16</CT>
        <CT x={1228} y={312} len={25} c={TEAL} r>N2C14</CT>
        <CT x={1247} y={312} len={32} c={TEAL} r>#9080</CT>

        {/* dimensions */}
        <CT x={1704} y={307} len={48} s={24} c="#f0f0f0" r>3300</CT>
        <CT x={1704} y={562} len={48} s={24} c="#f0f0f0" r>5500</CT>
        <CT x={1796} y={308} len={35} s={20} c="#c8c8c8" r>3300</CT>
        <CT x={1796} y={562} len={35} s={20} c="#c8c8c8" r>5500</CT>

        <Axis x={879} y={222} t="3" />
        <Axis x={1053} y={222} t="4" />
        <Axis x={1428} y={222} t="5" />
        <Axis x={1573} y={222} t="6" />
        <Axis x={879} y={637} t="3" />
        <Axis x={1053} y={637} t="4" />
        <Axis x={1428} y={637} t="5" />
        <Axis x={1573} y={637} t="6" />
        <Axis x={621} y={377} t="G" />
        <Axis x={1848} y={377} t="G" />

        {/* ucs marker */}
        <path d="M670 590V565" stroke="#14e014" strokeWidth="4" />
        <path d="M670 552l-6 14h12z" fill="#14e014" />
        <path d="M676 590H698" stroke="#f01010" strokeWidth="4" />
        <path d="M707 590l-14-6v12z" fill="#f01010" />
        <circle cx="670" cy="590" r="6" fill="#1818c8" />
        <CT x={665} y={544} len={11} c="#14d014" s={17}>Y</CT>
        <CT x={710} y={590} len={11} c="#f01010" s={17}>X</CT>

        {/* hand drawn mark */}
        <path d="M953 277L998 276L1008 279L1055 284L1075 285L1116 297L1149 302L1169 311L1218 316L1246 314L1369 313L1402 320L1434 343L1443 352L1450 370L1447 385L1434 405L1418 422L1398 432L1381 443L1357 462L1328 471L1299 473L1285 478L1246 481L1186 478L1153 473L1096 470L1055 463L994 454L953 447L892 445L871 442L851 433L826 418L822 402L826 375L839 348L855 328L884 312L920 288Z" fill="none" stroke="#e41e1e" strokeWidth="4" strokeLinejoin="round" />
      </svg>
      <SideDock />
    </div>
  );
}

function SideDock() {
  return (
    <div className="absolute right-0 top-[1px] flex h-[307px] w-[24px] flex-col overflow-hidden rounded-l-[4px] bg-white">
      <svg width="24" height="307" viewBox="0 0 24 307" fill="none" stroke="#7aa7d8" strokeWidth="1.500">
        <path d="M24 16C12 14 1 22 2 32c1 6 12 8 22 2" stroke="#4f90d8" />
        <path d="M8 52l8-6h8M8 52v24h16M8 52h16" stroke={G} />
        <text x="9" y="70" fontSize="10" fontWeight="700" fill="#2f80e8" stroke="none" fontFamily="'Liberation Sans', sans-serif">3D</text>
        <path d="M8 92l8-6h8M8 92v22h16M8 92h16" stroke="#4f90d8" />
        <path d="M20 124h6l-3 5z" fill="#555" stroke="none" />
        <path d="M8 142l8-6h8M8 142v20h16V142H8" fill="#cfe4fc" stroke="#4f90d8" />
        <path d="M20 172h6l-3 5z" fill="#555" stroke="none" />
        <path d="M8 198v-6h6M8 212v6h6" stroke={G} />
        <rect x="8" y="225" width="20" height="24" rx="2" stroke={G} strokeDasharray="3 2" />
        <path d="M14 232l6-3 6 3v8l-6 3-6-3z" stroke={B} />
        <path d="M6 256H24" stroke="#bbb" strokeWidth="1" />
        <rect x="8" y="266" width="20" height="25" rx="2" stroke={G} />
        <path d="M12 272h12M12 277h12M12 282h4" stroke={G} strokeDasharray="2 1.500" />
      </svg>
    </div>
  );
}

const cell = "border border-[#e6e6e6] font-normal";
const th = `${cell} text-center`;
const td = `${cell} pl-[4px] text-left`;

function BeamTable() {
  return (
    <div className="min-h-0 flex-1 overflow-hidden bg-white pl-[1px]">
      <table className="w-[1299px] table-fixed border-collapse">
        <colgroup>
          <col className="w-[9px]" />
          <col className="w-[76px]" />
          <col className="w-[76px]" />
          <col className="w-[76px]" />
          <col className="w-[101px]" />
          <col className="w-[102px]" />
          <col className="w-[101px]" />
          <col className="w-[101px]" />
          <col className="w-[101px]" />
          <col className="w-[102px]" />
          <col className="w-[101px]" />
          <col className="w-[127px]" />
          <col className="w-[101px]" />
          <col className="w-[125px]" />
        </colgroup>
        <thead>
          <tr className="h-[21px]">
            <th rowSpan={2} className={`${th} bg-[#f4f4f4]`} />
            <th rowSpan={2} className={th}>位置</th>
            <th rowSpan={2} className={th}>名称</th>
            <th rowSpan={2} className={th}>跨号</th>
            <th colSpan={2} className={th} />
            <th rowSpan={2} className={th}>上通长筋</th>
            <th colSpan={3} className={`${th} bg-[#7cb8f8] text-white`}>上部钢筋</th>
            <th colSpan={2} className={th}>下部钢筋</th>
            <th colSpan={2} className={th}>侧面钢筋</th>
          </tr>
          <tr className="h-[21px] whitespace-nowrap">
            <th className={th}>截面(B*H)</th>
            <th className={th}>距左边线距离</th>
            <th className={th}>左支座钢筋</th>
            <th className={th}>跨中钢筋</th>
            <th className={`${th} bg-[#7cb8f8] text-white`}>右支座钢筋</th>
            <th className={th}>下通长筋</th>
            <th className={th}>下部钢筋</th>
            <th className={th}>侧面通长筋</th>
            <th className={`${th} overflow-hidden pl-[8px] text-left`}>侧面原位标注筋</th>
          </tr>
        </thead>
        <tbody>
          <tr className="h-[27px]">
            <td className={`${cell} bg-[#f4f4f4] pr-[1px] text-right text-[14px] leading-none`}>1</td>
            <td rowSpan={2} className={`${td} whitespace-nowrap leading-[26px]`}>&lt;2+150,<br />G+25;5...</td>
            <td rowSpan={2} className={td}>KZL5(2)</td>
            <td className={td}>0</td>
            <td className={td}>250*600</td>
            <td className={td}>(125)</td>
            <td className={td}>2<R />20</td>
            <td className={td} />
            <td className={td} />
            <td className={td}>8<R />20 4/4</td>
            <td className={td} />
            <td className={td}>2<R />18/3<R />20</td>
            <td className={td}>G4<R />16</td>
            <td className={td}>G4<R />12</td>
          </tr>
          <tr className="h-[26px]">
            <td className={`${cell} bg-[#5aa5f2] pr-[1px] text-right text-[14px] font-bold leading-none text-white`}>2</td>
            <td className={td}>1</td>
            <td className={td}>(250*700)</td>
            <td className={td}>(125)</td>
            <td className={td} />
            <td className={td} />
            <td className={td}>4<R />20</td>
            <td className={`${td} relative shadow-[inset_0_0_0_1px_#6aa8ea,inset_-1px_-1px_0_1px_#6aa8ea]`}>
              <span className="absolute -bottom-[2px] -right-[2px] h-[5px] w-[5px] bg-[#4f9aea]" />
            </td>
            <td className={td} />
            <td className={td}>4<R />22</td>
            <td className={td} />
            <td className={td} />
          </tr>
        </tbody>
      </table>
      <div className="h-[132px] w-[9px] bg-[#f4f4f4]" />
    </div>
  );
}

function BeamPanel() {
  const actions = ["复制跨数据", "粘贴跨数据", "输入当前列数据", "删除当前列数据", "页面设置", "调换起始跨", "悬臂钢筋代号"];
  return (
    <div className="relative flex min-h-0 flex-1 flex-col bg-white">
      <div className="h-[14px] shrink-0 bg-[#e9e9e9]" />
      <div className="flex h-[27px] shrink-0 items-center bg-[#f0f0f0] pl-[11px] text-[#777]">梁平法表格</div>
      <div className="flex h-[36px] shrink-0 items-center gap-[15px] border-t border-[#e4e4e4] pl-[8px]">
        {actions.map((t) => (
          <span key={t} className={t === "粘贴跨数据" ? "text-[#bcbcbc]" : ""}>{t}</span>
        ))}
      </div>
      <BeamTable />
      <div className="flex h-[18px] shrink-0 items-center border-b border-[#e4e4e4] pl-[8px]">
        <span className="h-0 w-0 border-y-[4px] border-r-[5px] border-y-transparent border-r-[#555]" />
        <div className="ml-[312px] h-[10px] w-[433px] rounded-full bg-[#c8c8c8]" />
      </div>
      <svg className="absolute left-[745px] top-[67px]" width="130" height="150" viewBox="1352 725 130 150" fill="none" stroke="#e41e1e" strokeWidth="4" strokeLinecap="round" strokeLinejoin="round">
        <path d="M1405 733L1418 728L1443 731L1455 747L1471 773L1476 793L1469 827L1463 842L1443 857L1424 868L1389 870L1361 868L1354 860L1354 820L1357 793L1369 760L1389 747L1404 741L1426 742" />
      </svg>
    </div>
  );
}

const Btn = ({ w = "w-[30px]", active, children }) => (
  <div className={`flex h-[22px] shrink-0 items-center justify-center rounded-t-[3px] border border-b-0 ${w} ${active ? "border-[#4f9aea] bg-[#e3effc]" : "border-[#cfcfcf] bg-white"}`}>{children}</div>
);

function StatusBar() {
  return (
    <div className="flex h-[28px] items-end whitespace-nowrap bg-[#f8f8f8] text-[15px]">
      <div className="flex h-full w-[845px] shrink-0 items-center">
        <span className="-ml-[1px] w-[318px] [word-spacing:3.5px]">= 7447 Y = 34935</span>
        <span className="w-[103px] [word-spacing:2px]">层高：7</span>
        <span className="w-[167px]">标高：9.1~16.1</span>
        <span className="w-[128px]">1(1)</span>
        <span>隐藏：0</span>
      </div>
      <Btn><svg width="18" height="18" viewBox="0 0 18 18" fill="none" stroke={G}><path d="M3 2v14h13M3 11h5v5" /></svg></Btn>
      <div className="ml-[4px]">
        <Btn w="w-[44px]" active>
          <svg width="20" height="18" viewBox="0 0 20 18" fill="none" stroke={G}><rect x="2" y="2" width="15" height="16" rx="2" /><circle cx="2" cy="2" r="1.500" stroke={B} /></svg>
          <Caret c="#555" w="ml-[3px]" />
        </Btn>
      </div>
      <div className="ml-[8px]"><Btn w="w-[31px]"><svg width="18" height="18" viewBox="0 0 18 18" stroke="#9a9a9a"><path d="M2 1l14 16M16 1L2 17" /></svg></Btn></div>
      <div className="ml-[8px]"><Btn w="w-[44px]"><svg width="18" height="18" viewBox="0 0 18 18" fill="none" stroke={G}><path d="M13 1L3 16h14M9 7c2 2 3 5 3 9" /></svg><Caret c="#555" w="ml-[3px]" /></Btn></div>
      <div className="ml-[5px]"><Btn w="w-[44px]"><svg width="18" height="18" viewBox="0 0 18 18" fill="none" stroke={G}><path d="M4 2v7M1 5h7" /><rect x="7" y="12" width="10" height="5" fill={G} /></svg><Caret c="#555" w="ml-[3px]" /></Btn></div>
      <div className="ml-[5px]"><Btn><svg width="18" height="18" viewBox="0 0 18 18" fill="none" stroke={G} strokeWidth="1.300"><rect x="2" y="2" width="11" height="11" /><rect x="4" y="4" width="7" height="7" fill={G} /><path d="M13 8h3v8h-6v-3" /></svg></Btn></div>
      <div className="ml-[5px]"><Btn><svg width="18" height="18" viewBox="0 0 18 18" fill="none" stroke={G}><path d="M3 18V8l3-5 10-2" /><path d="M11 11l4 3-4 3z" fill={G} /></svg></Btn></div>
      <div className="ml-[8px] flex h-full items-center">按鼠标左键选择梁图元，按右键或 ESC 退出；可以通过回车键及 Shift+\"→←↑\" 光标键在跨之间、</div>
    </div>
  );
}

export default function App() {
  return (
    <div className="flex h-[1008px] w-[1888px] flex-col overflow-hidden bg-white font-['Noto_Sans','Noto_Sans_CJK_SC',sans-serif] text-[15px] leading-none text-[#3d3d3d]">
      <div className="relative">
        <svg className="absolute left-0 top-[4px]" width="34" height="38" viewBox="0 0 34 38">
          <defs><linearGradient id="tlogo" x1="0" y1="0" x2="1" y2="1"><stop offset="0" stopColor="#25d0f0" /><stop offset="1" stopColor="#1476f0" /></linearGradient></defs>
          <path d="M1 3h28c4 0 4 7 0 7H21v21c0 6-9 6-9 0V11H3C0 11-1 4 1 3z" fill="url(#tlogo)" />
        </svg>
        <span className="absolute left-[33px] top-[37px] h-0 w-0 border-b-[5px] border-l-[5px] border-b-[#888] border-l-transparent" />
        <TitleBar />
        <TabBar />
      </div>
      <Ribbon />
      <FormatBar />
      <div className="flex min-h-0 flex-1 gap-[3px] bg-[#f0f0f0]">
        <NavPanel />
        <div className="flex w-[349px] shrink-0 flex-col">
          <DrawingPanel />
          <PropsPanel />
        </div>
        <div className="ml-[2px] flex min-w-0 flex-1 flex-col">
          <CadView />
          <div className="relative flex h-[6px] shrink-0 justify-center bg-white">
            <div className="h-[5px] w-[125px] bg-[#7d8a96]" />
          </div>
          <BeamPanel />
        </div>
      </div>
      <StatusBar />
    </div>
  );
}
